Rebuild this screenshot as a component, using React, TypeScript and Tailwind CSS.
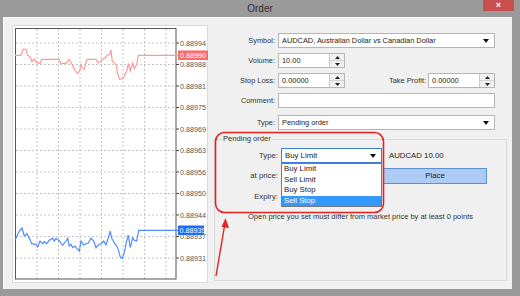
import React from "react";

const redLine = [
  [14, 54.3], [20, 54.3], [22, 48.3], [25, 48.3], [26.7, 54.3], [29.3, 56], [31, 60.7], [33.3, 58.3],
  [35.7, 61.7], [39, 62.3], [40.7, 58.3], [58.3, 58.3], [60, 62.3], [65, 62.3], [68.3, 58.3], [70.7, 62.7],
  [74, 69.3], [76.7, 72.3], [78.7, 69.3], [80, 64], [81.3, 66.7], [83.3, 68.3], [86, 58.3], [95, 58.3],
  [97.3, 61.7], [100, 60], [103.3, 57.3], [106, 54.3], [108.7, 53.3], [110, 49], [111.3, 60.7], [113.3, 61.7],
  [115, 63.7], [116.7, 73.3], [118.7, 78.3], [121.3, 77.7], [123.3, 75], [126, 69], [127.3, 62.3], [129.3, 70],
  [131.7, 62], [133.3, 67.7], [135.7, 63.3], [137.3, 54.3], [177, 54.3],
];

const blueLine = [
  [14, 239.3], [18.3, 230], [21, 227], [23.3, 235], [26, 232.7], [28.3, 237.3], [30.7, 242.7], [35, 243.3],
  [36.7, 246], [39, 240], [41.7, 242.7], [43.3, 240.7], [45.7, 242.7], [48.3, 239.3], [51.7, 237.3], [53.3, 240],
  [55, 237.3], [58.3, 240], [61.7, 244.3], [65, 240], [66.7, 237.3], [68.3, 245], [70, 243.3], [71.7, 246.7],
  [74, 245], [76.7, 248.3], [78.3, 250], [80, 240], [82.7, 244], [85, 242.7], [87.3, 242], [90, 237.3],
  [92.7, 240], [95, 246.7], [97.3, 244], [100, 242.7], [102.7, 240], [105, 244], [107.3, 236.7], [109.3, 230],
  [110.7, 237.3], [113.3, 241.7], [116.7, 246.7], [119.3, 256], [121.3, 257.3], [123.3, 251.7], [125.3, 241.7],
  [127.3, 234], [129.3, 246.7], [131.7, 236.7], [133.3, 239.3], [135.7, 240], [137.7, 229.3], [177, 229.3],
];

const prices = ["0.88994", "0.88988", "0.88981", "0.88975", "0.88969", "0.88963", "0.88956", "0.88950", "0.88944", "0.88937", "0.88931"];

const pts = (a: number[][]) => a.map(([x, y]) => `${x},${y}`).join(" ");

const Chart = () => (
  <svg width="195" height="257" viewBox="12 25 195 257" className="block">
    {[36, 57.5, 79, 100.5, 122, 143.5, 165].map((x) => (
      <line key={x} x1={x} y1={28} x2={x} y2={278} stroke="#c4c4c4" strokeWidth="1" strokeDasharray="2 2" />
    ))}
    {prices.map((p, i) => {
      const y = 42 + i * 21.5;
      return (
        <g key={p}>
          <line x1={15} y1={y} x2={175} y2={y} stroke="#c4c4c4" strokeWidth="1" strokeDasharray="2 2" />
          <line x1={175} y1={y} x2={178} y2={y} stroke="#444" strokeWidth="1" />
          <text x={179} y={y + 2.6} fontSize="7.2" fill="#555" fontFamily="Liberation Sans, Arial, sans-serif">{p}</text>
        </g>
      );
    })}
    <rect x={14.5} y={27.5} width={160.5} height={250.5} fill="none" stroke="#555" strokeWidth="1" />
    <polyline points={pts(redLine)} fill="none" stroke="#ff9a9a" strokeWidth="1.2" />
    <polyline points={pts(blueLine)} fill="none" stroke="#4d8dff" strokeWidth="1.2" />
    <rect x={177} y={49.5} width={31} height={9.5} fill="#fb6b6b" />
    <text x={179} y={57} fontSize="7.2" fill="#fff" fontFamily="Liberation Sans, Arial, sans-serif">0.88990</text>
    <rect x={177} y={224.5} width={26} height={9.5} fill="#1c6cf5" />
    <text x={178.5} y={232} fontSize="7.2" fill="#fff" fontFamily="Liberation Sans, Arial, sans-serif">0.88939</text>
  </svg>
);

const Arrow = () => (
  <svg width="6" height="4" viewBox="0 0 6 4" className="block">
    <path d="M0 0 L6 0 L3 4 Z" fill="#111" />
  </svg>
);

const Spin = () => (
  <div className="flex w-[15px] flex-col border-l border-[#c9c9c9] bg-[#f1f1f1]">
    <div className="flex flex-1 items-center justify-center border-b border-[#d2d2d2]">
      <svg width="5" height="3" viewBox="0 0 5 3"><path d="M0 3 L5 3 L2.5 0 Z" fill="#222" /></svg>
    </div>
    <div className="flex flex-1 items-center justify-center">
      <svg width="5" height="3" viewBox="0 0 5 3"><path d="M0 0 L5 0 L2.5 3 Z" fill="#222" /></svg>
    </div>
  </div>
);

const Label = ({ children, w = "w-[70px]" }: { children: React.ReactNode; w?: string }) => (
  <div className={`${w} shrink-0 pr-[3px] text-right text-[#333]`}>{children}</div>
);

const SpinBox = ({ value }: { value: string }) => (
  <div className="flex h-full w-[67px] border border-[#b5b5b5] bg-white">
    <div className="flex flex-1 items-center pl-[3px] text-[#222]">{value}</div>
    <Spin />
  </div>
);

const Combo = ({ value, w }: { value: string; w: string }) => (
  <div className={`flex h-full ${w} items-center justify-between border border-[#b5b5b5] bg-white pl-[3px] pr-[5px] text-[#222]`}>
    <span>{value}</span>
    <Arrow />
  </div>
);

export default function App() {
  return (
    <div
      className="relative h-[296px] w-[520px] overflow-hidden bg-[#9a9a9a]"
      style={{ fontFamily: '"Liberation Sans", Arial, sans-serif' }}
    >
      <div className="flex h-[17px] items-center justify-center text-[10px] text-[#2e2e2e]">Order</div>
      <div className="absolute right-[6px] top-0 flex h-[11px] w-[31px] items-center justify-center bg-[#c94f4f] text-[9px] font-bold leading-none text-white">
        ×
      </div>

      <div className="ml-[3px] flex h-[272px] w-[509px] border-t border-l border-[#fafafa] bg-[#f0f0f0] text-[7.4px] leading-none">
        <div className="ml-[8px] mt-[7px] h-[258px] w-[196px] border border-[#dadada] bg-white">
          <Chart />
        </div>

        <div className="flex flex-1 flex-col pt-[15px]">
          <div className="flex flex-col gap-[5px]">
            <div className="flex h-[15px] items-center">
              <Label>Symbol:</Label>
              <Combo value="AUDCAD, Australian Dollar vs Canadian Dollar" w="w-[217px]" />
            </div>
            <div className="flex h-[15px] items-center">
              <Label>Volume:</Label>
              <SpinBox value="10.00" />
            </div>
            <div className="flex h-[15px] items-center">
              <Label>Stop Loss:</Label>
              <SpinBox value="0.00000" />
              <div className="w-[83px] pr-[2px] text-right text-[#333]">Take Profit:</div>
              <SpinBox value="0.00000" />
            </div>
            <div className="flex h-[15px] items-center">
              <Label>Comment:</Label>
              <div className="h-full w-[217px] border border-[#b5b5b5] bg-white" />
            </div>
            <div className="mt-[2px] flex h-[15px] items-center">
              <Label>Type:</Label>
              <Combo value="Pending order" w="w-[217px]" />
            </div>
          </div>

          <fieldset className="ml-[6px] mt-[4px] h-[147px] w-[293px] border border-[#d8d8d8]">
            <legend className="ml-[7px] px-[1px] text-[7.6px] leading-[10px] text-[#333]">Pending order</legend>
            <div className="flex flex-col pt-[4px] text-[7.8px]">
              <div className="flex h-[15px] items-center">
                <Label w="w-[66px]">Type:</Label>
                <div className="relative h-full">
                  <div className="flex h-full w-[101px] items-center justify-between border border-[#3a7fd6] bg-white pl-[3px] pr-[5px] text-[#222]">
                    <span>Buy Limit</span>
                    <Arrow />
                  </div>
                  <div className="absolute left-0 top-[15px] z-10 flex w-[101px] flex-col border border-[#7a7a7a] bg-white text-[#222]">
                    <div className="flex h-[10.5px] items-center pl-[2px]">Buy Limit</div>
                    <div className="flex h-[10.5px] items-center pl-[2px]">Sell Limit</div>
                    <div className="flex h-[10.5px] items-center pl-[2px]">Buy Stop</div>
                    <div className="flex h-[10.5px] items-center bg-[#3399ff] pl-[2px] text-white">Sell Stop</div>
                  </div>
                </div>
                <div className="ml-[7px] text-[#222]">AUDCAD 10.00</div>
              </div>
              <div className="mt-[5px] flex h-[16px] items-center">
                <Label w="w-[66px]">at price:</Label>
                <div className="h-full w-[101px] border border-[#b5b5b5] bg-white" />
                <div className="ml-[1px] flex h-full w-[104px] items-center justify-center border border-[#5d8fd6] bg-[#aecbf5] text-[#222]">
                  Place
                </div>
              </div>
              <div className="mt-[5px] flex h-[15px] items-center">
                <Label w="w-[66px]">Expiry:</Label>
                <div className="h-full w-[101px] border border-[#b5b5b5] bg-white" />
              </div>
              <div className="ml-[33px] mt-[8px] text-[7.5px] leading-[10px] text-[#333]">
                Open price you set must differ from market price by at least 0 points
              </div>
            </div>
          </fieldset>
        </div>
      </div>

      <svg className="pointer-events-none absolute left-0 top-0" width="520" height="296" viewBox="0 0 520 296">
        <rect x={215.5} y={132.5} width={168} height={80} rx={9} fill="none" stroke="#e8221f" strokeWidth="1.6" />
        <line x1={216} y1={276} x2={224.5} y2={226} stroke="#e8221f" strokeWidth="1.4" />
        <path d="M225.5 218 L229 228 L221.5 227 Z" fill="#e8221f" />
      </svg>
    </div>
  );
}
